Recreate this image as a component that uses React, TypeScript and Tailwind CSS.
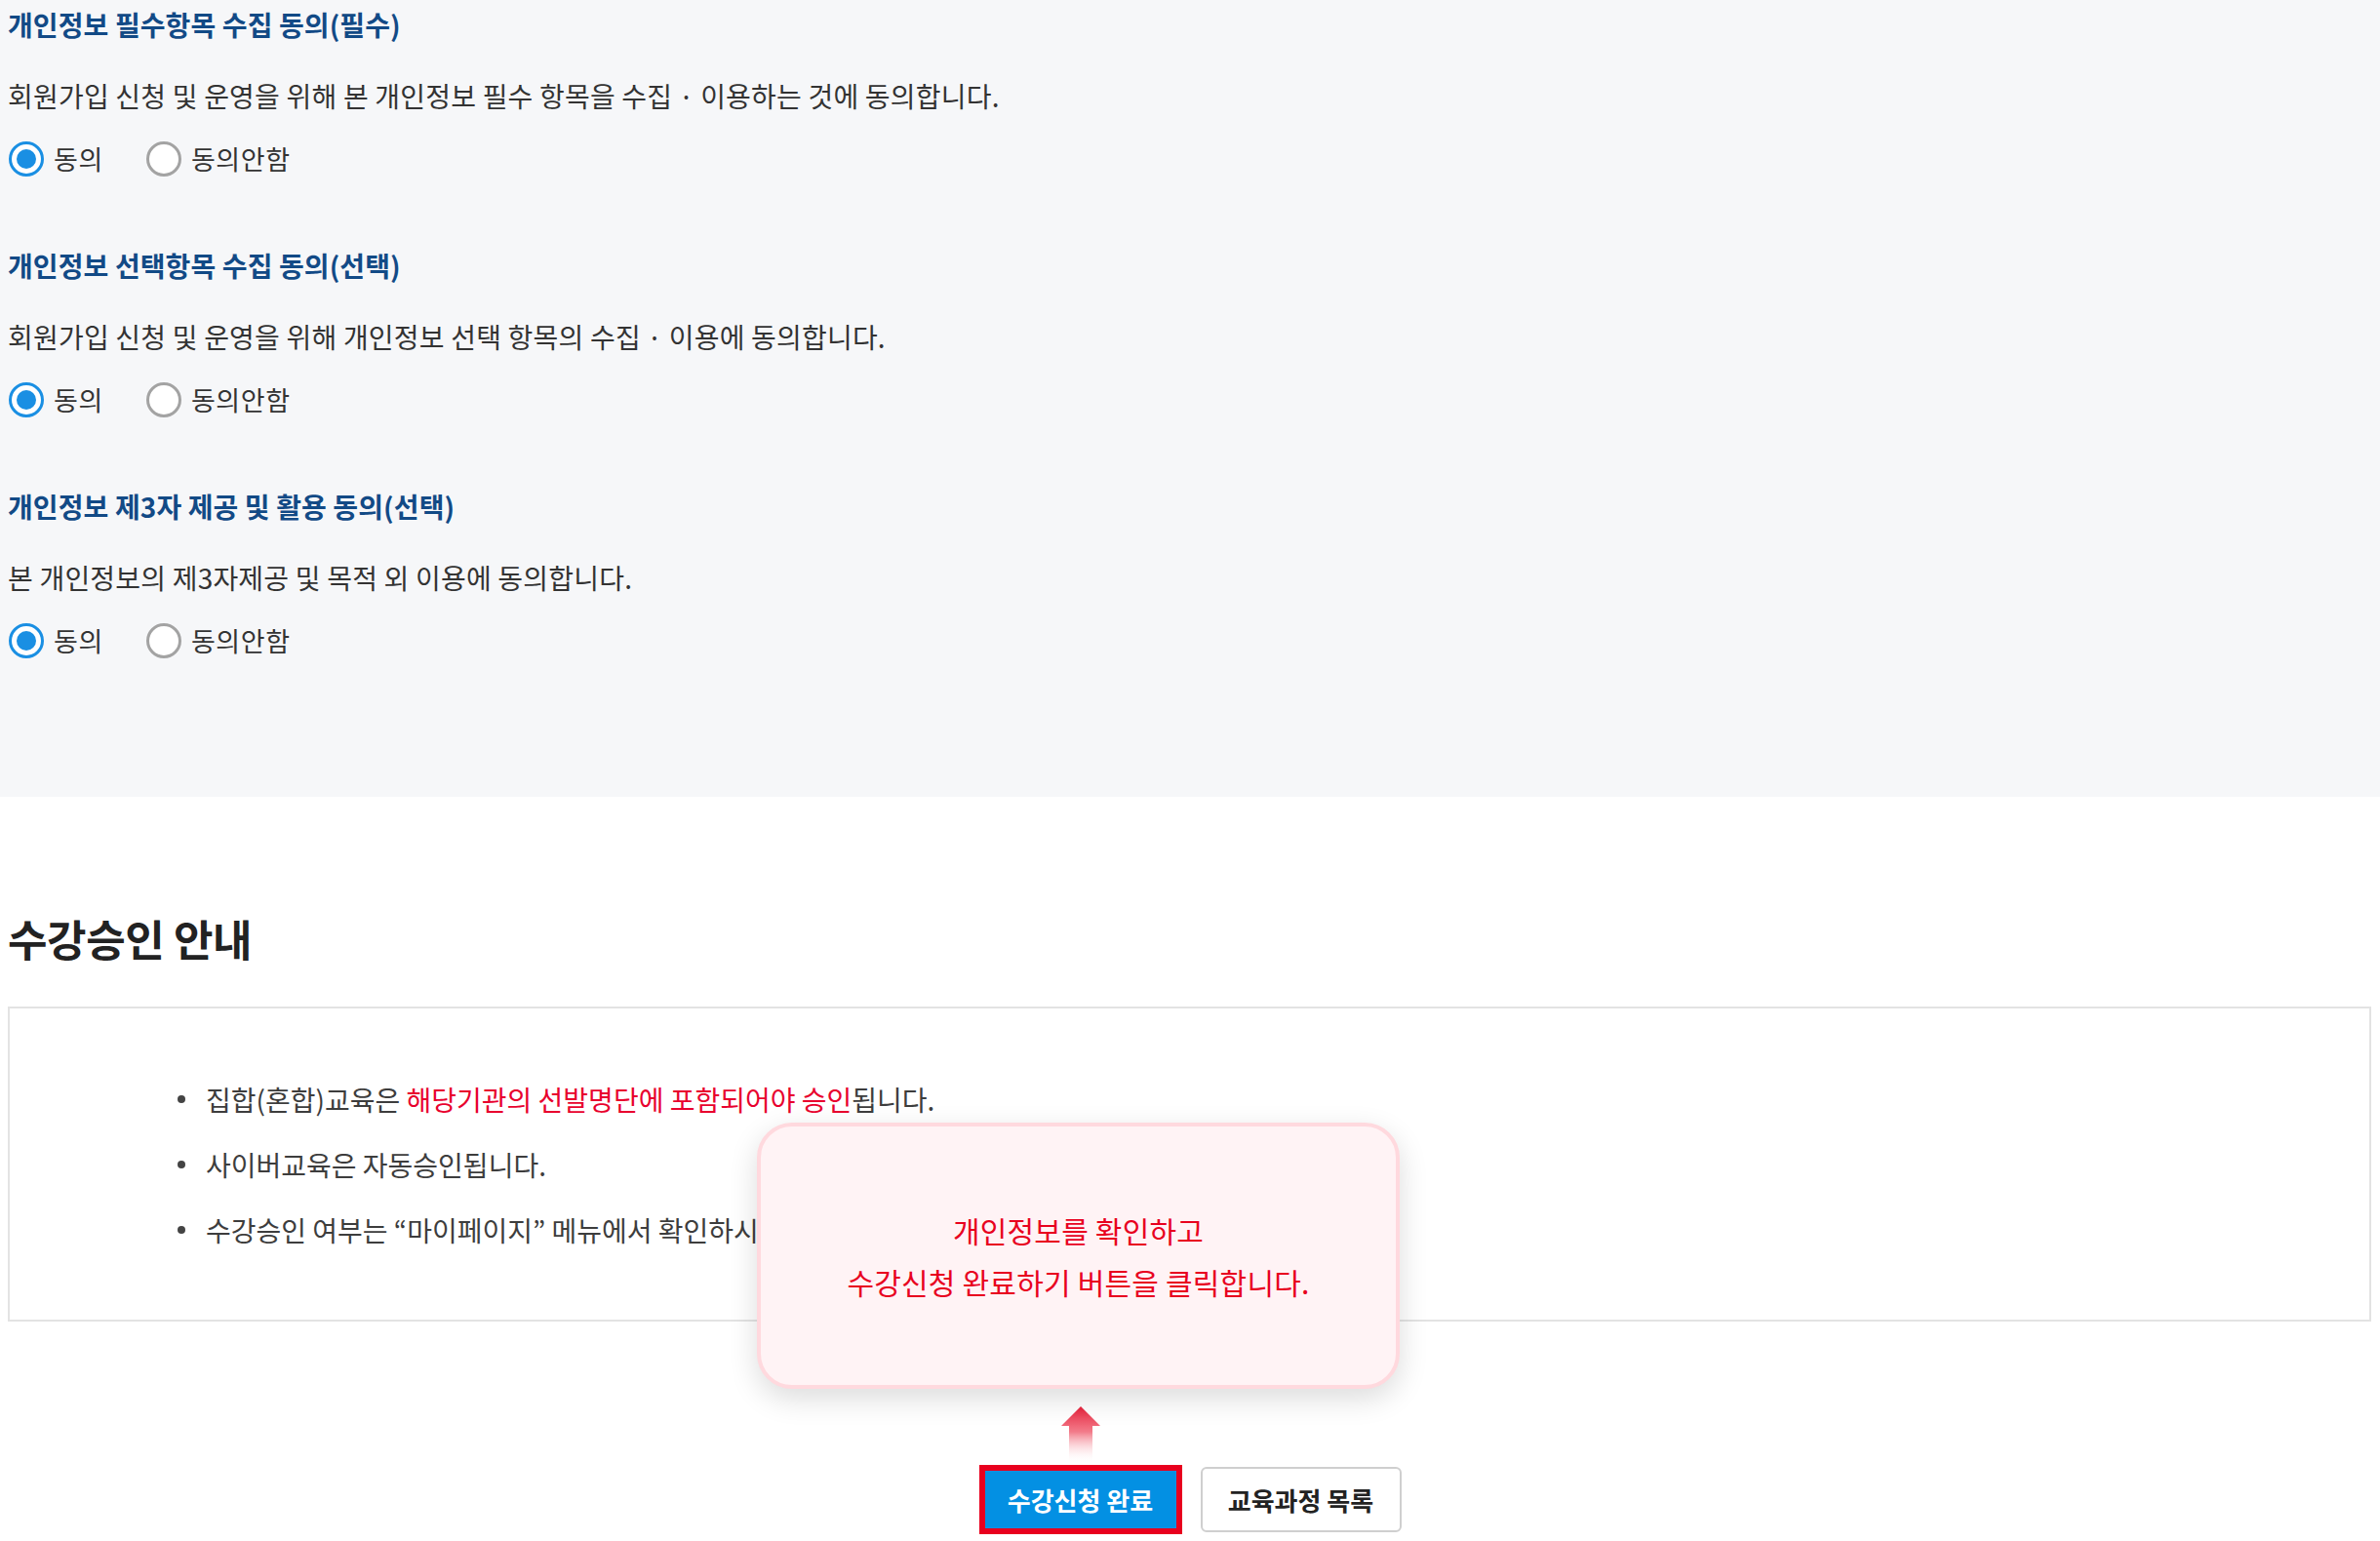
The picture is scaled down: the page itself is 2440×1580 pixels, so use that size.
import React from 'react';

type ConsentProps = {
  title: string;
  desc: string;
};

function Radio({ checked, label }: { checked?: boolean; label: string }) {
  return (
    <label className="flex items-center gap-[10px]">
      {checked ? (
        <span className="flex h-[36px] w-[36px] items-center justify-center rounded-full border-[3px] border-[#1a8fe3] bg-white">
          <span className="h-[20px] w-[20px] rounded-full bg-[#1a8fe3]" />
        </span>
      ) : (
        <span className="h-[36px] w-[36px] rounded-full border-[3px] border-[#a3a3a3] bg-white" />
      )}
      <span className="text-[27px] leading-[40px] tracking-[0.6px] text-[#333]">{label}</span>
    </label>
  );
}

function ConsentBlock({ title, desc }: ConsentProps) {
  return (
    <div className="flex flex-col">
      <h3 className="h-[40px] text-[28px] font-bold leading-[40px] tracking-[0.1px] text-[#124a86]">{title}</h3>
      <p className="mt-[33px] h-[40px] text-[28px] leading-[40px] tracking-[0.2px] text-[#333]">{desc}</p>
      <div className="mt-[25px] flex h-[40px] items-center gap-[44px] pl-[1px]">
        <Radio checked label="동의" />
        <Radio label="동의안함" />
      </div>
    </div>
  );
}

const consents: ConsentProps[] = [
  {
    title: '개인정보 필수항목 수집 동의(필수)',
    desc: '회원가입 신청 및 운영을 위해 본 개인정보 필수 항목을 수집 · 이용하는 것에 동의합니다.',
  },
  {
    title: '개인정보 선택항목 수집 동의(선택)',
    desc: '회원가입 신청 및 운영을 위해 개인정보 선택 항목의 수집 · 이용에 동의합니다.',
  },
  {
    title: '개인정보 제3자 제공 및 활용 동의(선택)',
    desc: '본 개인정보의 제3자제공 및 목적 외 이용에 동의합니다.',
  },
];

export default function App() {
  return (
    <div className="relative h-[1580px] w-[2440px] overflow-hidden bg-white font-['Noto_Sans_CJK_KR','Noto_Sans',sans-serif]">
      {/* consent area */}
      <section className="flex h-[817px] flex-col gap-[69px] bg-[#f6f7f9] pl-[8px] pt-[5px]">
        {consents.map((c) => (
          <ConsentBlock key={c.title} {...c} />
        ))}
      </section>

      {/* approval guide */}
      <div className="px-[8px] pt-[117px]">
        <h2 className="h-[56px] text-[44px] font-bold leading-[56px] tracking-[-0.4px] text-[#222]">수강승인 안내</h2>
        <div className="mt-[42px] h-[323px] w-[2423px] border-2 border-[#e3e3e3] bg-white pt-[73px]">
          <ul className="flex flex-col gap-[27px] pl-[172px] text-[28px] leading-[40px] tracking-[0px] text-[#3d3d3d]">
            <li className="flex items-center gap-[21px]">
              <span className="h-[8px] w-[8px] rounded-full bg-[#444]" />
              <span>
                집합(혼합)교육은 <span className="text-[#e8002d]">해당기관의 선발명단에 포함되어야 승인</span>됩니다.
              </span>
            </li>
            <li className="flex items-center gap-[21px]">
              <span className="h-[8px] w-[8px] rounded-full bg-[#444]" />
              <span>사이버교육은 자동승인됩니다.</span>
            </li>
            <li className="flex items-center gap-[21px]">
              <span className="h-[8px] w-[8px] rounded-full bg-[#444]" />
              <span>수강승인 여부는 “마이페이지” 메뉴에서 확인하시기 바랍니다.</span>
            </li>
          </ul>
        </div>

        {/* buttons */}
        <div className="mt-[147px] flex items-center justify-center gap-[19px]">
          <div className="relative border-[6px] border-[#e8001e]">
            <button className="flex h-[59px] w-[196px] items-center justify-center bg-[#0390e3] text-[26px] font-bold text-white">
              수강신청 완료
            </button>
            {/* guide arrow */}
            <svg className="absolute left-[78px] top-[-66px]" width="40" height="58" viewBox="0 0 40 58">
              <defs>
                <linearGradient id="arrowFade" x1="0" y1="0" x2="0" y2="1">
                  <stop offset="0" stopColor="#e8213b" stopOpacity="1" />
                  <stop offset="0.45" stopColor="#ef5a6c" stopOpacity="0.8" />
                  <stop offset="1" stopColor="#ffffff" stopOpacity="0" />
                </linearGradient>
              </defs>
              <path d="M20 0 L40 20 L32 20 L32 58 L8 58 L8 20 L0 20 Z" fill="url(#arrowFade)" />
            </svg>
          </div>
          <button className="flex h-[67px] w-[206px] items-center justify-center rounded-[6px] border-2 border-[#cfcfcf] bg-white text-[26px] font-bold text-[#222]">
            교육과정 목록
          </button>
        </div>
      </div>

      {/* tooltip bubble */}
      <div className="absolute left-[776px] top-[1151px] flex h-[273px] w-[659px] flex-col items-center justify-center rounded-[36px] border-4 border-[#ffd9de] bg-[#fff3f5] text-center text-[30px] leading-[53px] tracking-[0.2px] text-[#e8001e] shadow-[0_10px_30px_rgba(0,0,0,0.14)]">
        <p>개인정보를 확인하고</p>
        <p>수강신청 완료하기 버튼을 클릭합니다.</p>
      </div>
    </div>
  );
}
